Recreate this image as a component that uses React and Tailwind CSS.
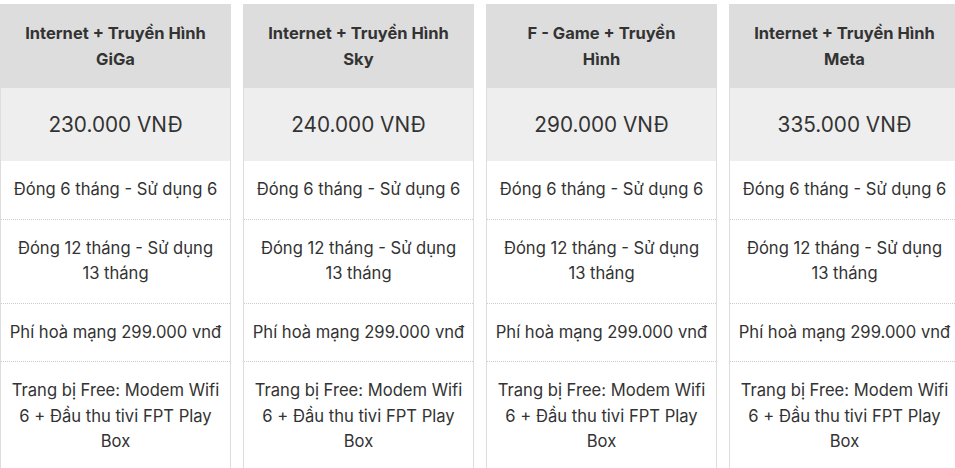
const plans = [
  { name: "Internet + Truyền Hình GiGa", price: "230.000 VNĐ" },
  { name: "Internet + Truyền Hình Sky", price: "240.000 VNĐ" },
  { name: "F - Game + Truyền Hình", price: "290.000 VNĐ" },
  { name: "Internet + Truyền Hình Meta", price: "335.000 VNĐ" },
]

const features = [
  "Đóng 6 tháng - Sử dụng 6",
  "Đóng 12 tháng - Sử dụng 13 tháng",
  "Phí hoà mạng 299.000 vnđ",
  "Trang bị Free: Modem Wifi 6 + Đầu thu tivi FPT Play Box",
]

function PlanCard({ plan }) {
  return (
    <div className="flex w-[231px] shrink-0 flex-col border-x border-[#dddddd] bg-white">
      <div className="-mx-px bg-[#dddddd] px-6 py-4 text-center text-[16.5px] font-bold leading-[26px] text-[#333333]">
        {plan.name}
      </div>
      <div className="bg-[#eeeeee] py-6 text-center text-[20.75px] leading-[25px] text-[#333333]">
        {plan.price}
      </div>
      <ul>
        {features.map((f, i) => (
          <li
            key={i}
            className="border-b border-dotted border-[#cccccc] px-2 py-[16px] text-center text-[16.6px] leading-[25.5px] text-[#333333] last:border-b-0"
          >
            {f}
          </li>
        ))}
      </ul>
    </div>
  )
}

export default function App() {
  return (
    <div className="h-[468px] w-[955px] overflow-hidden bg-white pt-1 font-['Inter','Noto_Sans',sans-serif]">
      <div className="flex gap-3">
        {plans.map((p) => (
          <PlanCard key={p.name} plan={p} />
        ))}
      </div>
    </div>
  )
}
